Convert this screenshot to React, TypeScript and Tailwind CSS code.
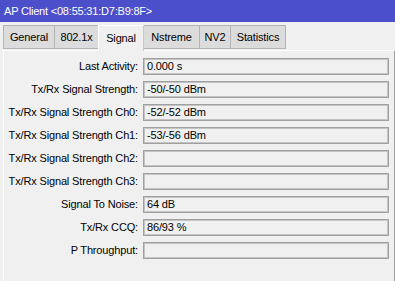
const tabs: [string, string][] = [
  ["General", "w-[52px]"],
  ["802.1x", "w-[45px]"],
  ["Signal", "w-[46px]"],
  ["Nstreme", "w-[57px]"],
  ["NV2", "w-[32px]"],
  ["Statistics", "w-[56px]"],
]

const rows: [string, string][] = [
  ["Last Activity:", "0.000 s"],
  ["Tx/Rx Signal Strength:", "-50/-50 dBm"],
  ["Tx/Rx Signal Strength Ch0:", "-52/-52 dBm"],
  ["Tx/Rx Signal Strength Ch1:", "-53/-56 dBm"],
  ["Tx/Rx Signal Strength Ch2:", ""],
  ["Tx/Rx Signal Strength Ch3:", ""],
  ["Signal To Noise:", "64 dB"],
  ["Tx/Rx CCQ:", "86/93 %"],
  ["P Throughput:", ""],
]

export default function App() {
  return (
    <div className="w-[395px] h-[281px] overflow-hidden bg-[#f0f0f0] flex flex-col text-[11px] tracking-[-0.15px] text-black font-['Liberation_Sans',Arial,sans-serif]">
      {/* title bar */}
      <div className="h-[22px] shrink-0 bg-[#4b4fca] text-white text-[11px] tracking-[-0.2px] leading-[22px] pl-[4px]">
        AP Client &lt;08:55:31:D7:B9:8F&gt;
      </div>

      {/* tabs */}
      <div className="h-[28px] shrink-0 flex items-end pl-[3px]">
        {tabs.map(([t, w]) =>
          t === "Signal" ? (
            <div
              key={t}
              className={`${w} h-[26px] -mb-px -ml-px relative z-10 flex items-center justify-center bg-[#f0f0f0] border-t border-l border-r border-[#c8c8c8] border-t-white border-l-white`}
            >
              {t}
            </div>
          ) : (
            <div
              key={t}
              className={`${w} h-[24px] mb-px flex items-center justify-center bg-[#dcdcdc] border border-[#b4b4b4] -ml-px first:ml-0`}
            >
              {t}
            </div>
          )
        )}
      </div>

      {/* panel */}
      <div className="flex-1 ml-[3px] w-[392px] border-t border-l border-white border-r border-r-[#a0a0a0] pt-[7px] flex flex-col gap-[6px]">
        {rows.map(([label, value]) => (
          <div key={label} className="flex items-center h-[17px]">
            <div className="w-[135px] text-right pr-px whitespace-nowrap">{label}</div>
            <div className="ml-[4px] w-[246px] h-[17px] border border-[#a0a0a0] shadow-[inset_0_0_0_1px_#c4c4c4] bg-[#f0f0f0] px-[3px] leading-[15px] whitespace-nowrap">
              {value}
            </div>
          </div>
        ))}
      </div>
    </div>
  )
}
